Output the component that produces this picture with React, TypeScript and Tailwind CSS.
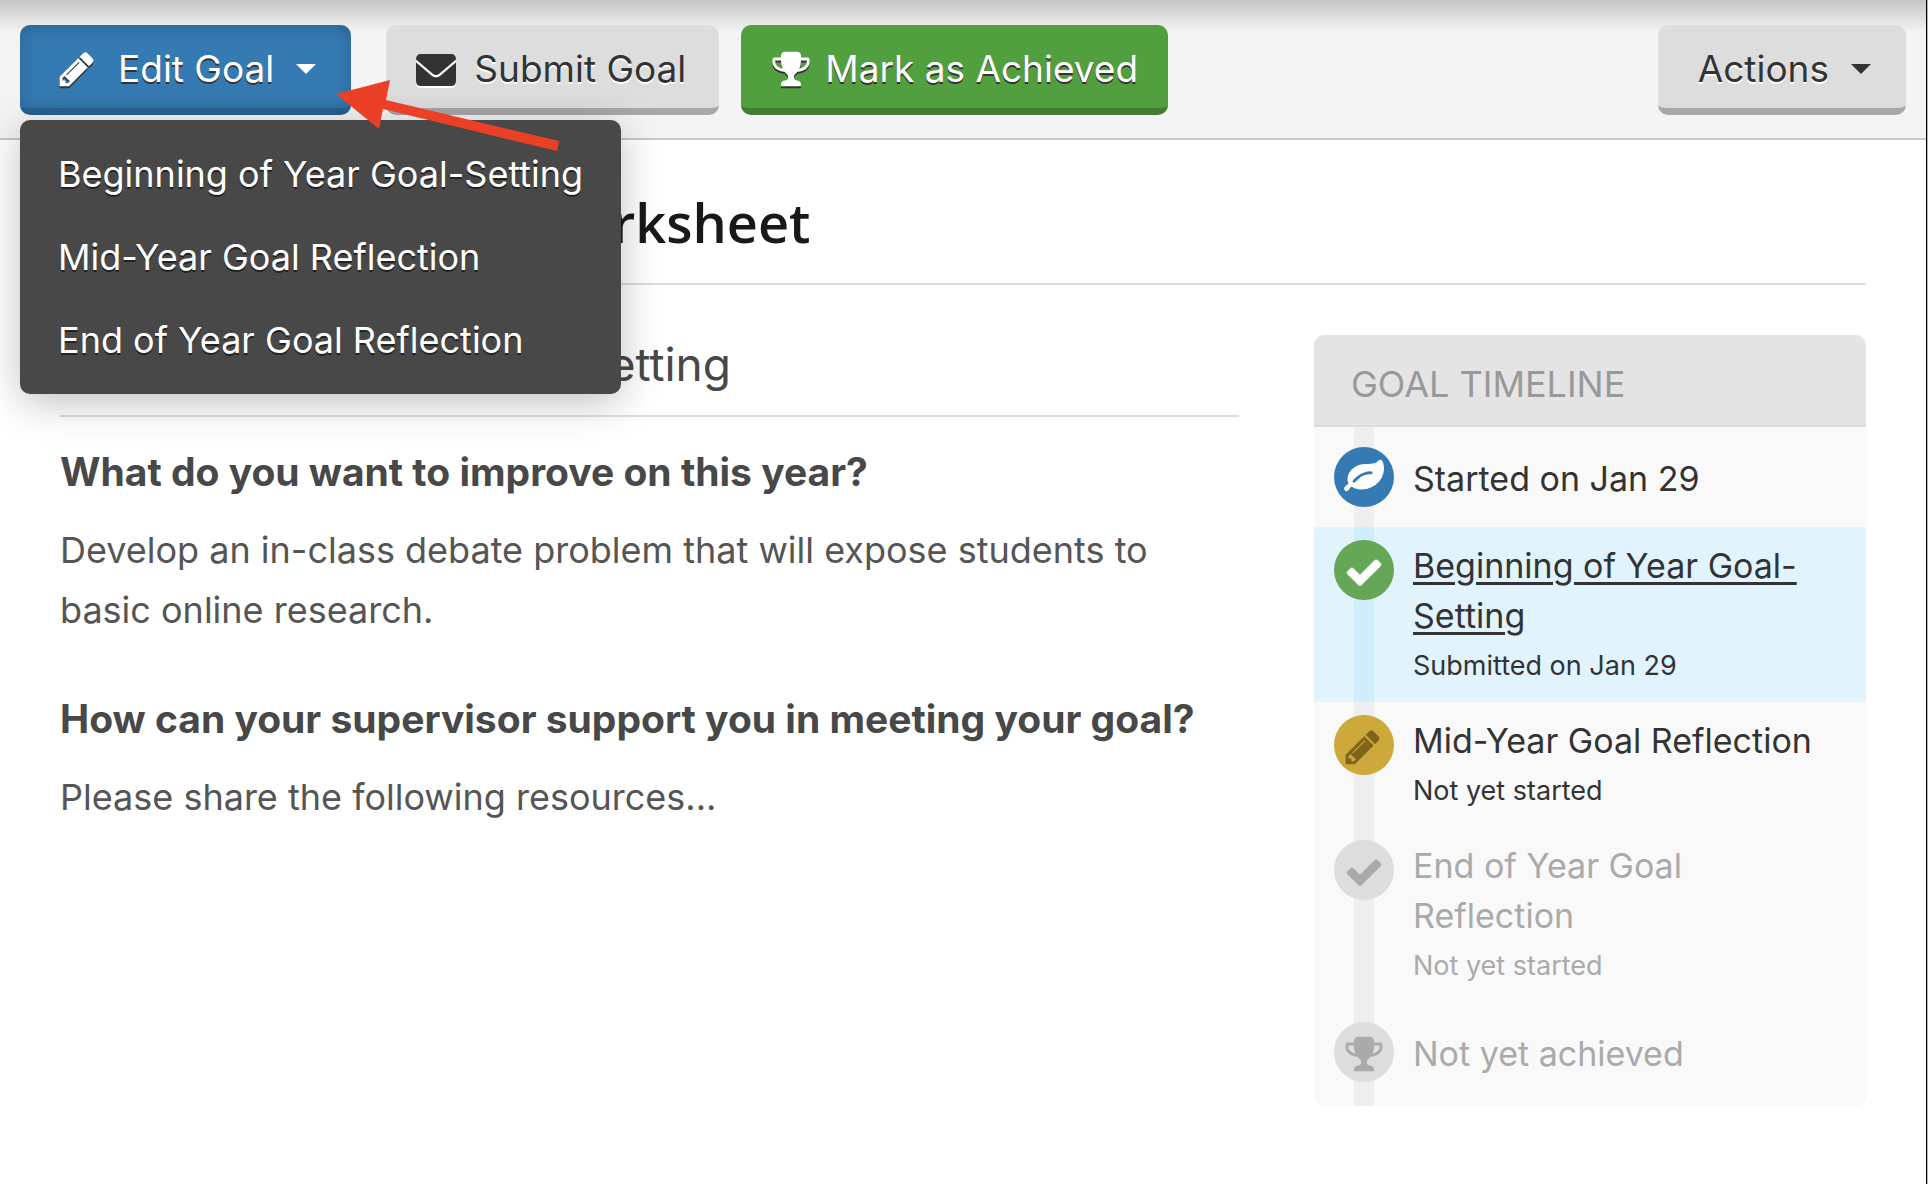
import React from "react";

type Glyph = { d: string; box: string };

const PENCIL: Glyph = {
  box: "-75 0 1792 1792",
  d: "M363 1536l91-91-235-235-91 91v107h128v128h107zm523-928q0-22-22-22-10 0-17 7l-542 542q-7 7-7 17 0 22 22 22 10 0 17-7l542-542q7-7 7-17zm-54-192l416 416-832 832h-416v-416zm683 96q0 53-37 90l-166 166-416-416 166-165q36-38 90-38 53 0 91 38l235 234q37 39 37 91z",
};
const CHECK: Glyph = {
  box: "0 0 1792 1792",
  d: "M1671 566q0 40-28 68l-724 724-136 136q-28 28-68 28t-68-28l-136-136-362-362q-28-28-28-68t28-68l136-136q28-28 68-28t68 28l294 295 656-657q28-28 68-28t68 28l136 136q28 28 28 68z",
};
const TROPHY: Glyph = {
  box: "0 0 1792 1792",
  d: "M522 883q-74-162-74-371h-256v96q0 78 94.5 162t235.5 113zm1078-275v-96h-256q0 209-74 371 141-29 235.5-113t94.5-162zm128-128v128q0 71-41.5 143t-112 130-173 97.5-215.5 44.5q-42 54-95 95-38 34-52.5 72.5t-14.5 89.5q0 54 30.5 91t97.5 37q75 0 133.5 45.5t58.5 114.5v64q0 14-9 23t-23 9h-832q-14 0-23-9t-9-23v-64q0-69 58.5-114.5t133.5-45.5q67 0 97.5-37t30.5-91q0-51-14.5-89.5t-52.5-72.5q-53-41-95-95-113-5-215.5-44.5t-173-97.5-112-130-41.5-143v-128q0-40 28-68t68-28h288v-96q0-66 47-113t113-47h576q66 0 113 47t47 113v96h288q40 0 68 28t28 68z",
};
const LEAF: Glyph = {
  box: "0 0 1792 1792",
  d: "M1280 704q0-26-19-45t-45-19q-172 0-318 49.5t-259.5 134-235.5 219.5q-19 21-19 45 0 26 19 45t45 19q24 0 45-19 27-24 74-71t67-66q137-124 268.5-176t313.5-52q26 0 45-19t19-45zm512-198q0 95-20 193-46 224-184.5 383t-357.5 268q-214 108-438 108-148 0-286-47-15-5-88-42t-96-37q-16 0-39.5 32t-45 70-52.5 70-60 32q-43 0-63.5-17.5t-45.5-59.5q-2-4-6-11t-5.5-10-3-9.5-1.5-13.5q0-35 31-73.5t68-65.5 68-56 31-48q0-4-14-38t-16-44q-9-51-9-104 0-115 43.5-220t119-184.5 170.5-139 204-95.5q55-18 145-25.5t179.5-9 178.5-6 163.5-24 113.5-56.5l29.5-29.5 29.5-28 27-20 36.5-16 43.5-4.5q39 0 70.5 46t47.5 112 24 124 8 96z",
};

function Icon({ glyph, className }: { glyph: Glyph; className?: string }) {
  return (
    <svg viewBox={glyph.box} fill="currentColor" aria-hidden="true" className={className}>
      <path d={glyph.d} />
    </svg>
  );
}

function Envelope() {
  return (
    <svg viewBox="0 0 40 40" aria-hidden="true" className="mr-[18px] size-10 drop-shadow-[0_2px_0_#ffffff]">
      <path fill="currentColor" d="M0 10.500q0-5.500 5-5.500h30q5 0 5 5.500L23.500 24.500q-3.500 3-7 0z" />
      <path fill="currentColor" d="M0 13.500L15.500 26.800q4.500 3.600 9 0L40 13.500v18.500q0 5-5 5H5q-5 0-5-5z" />
    </svg>
  );
}

function Caret() {
  return (
    <svg viewBox="0 0 20 10" fill="currentColor" aria-hidden="true" className="h-[10px] w-5">
      <path d="M0 0h20L10 10z" />
    </svg>
  );
}

const button =
  "flex h-[90px] items-center rounded-[10px] border-b-[7px] pt-1 text-[37px] leading-[48px] whitespace-nowrap";

const steps = [
  { title: "Started on Jan 29", note: "", icon: LEAF, circle: "bg-[#357ab2] text-white", text: "text-[#333333]", row: "py-5", rail: "bg-[#eeeeee]", link: false },
  { title: "Beginning of Year Goal-Setting", note: "Submitted on Jan 29", icon: CHECK, circle: "bg-[#65a657] pt-1 text-white", text: "text-[#333333]", row: "bg-[#e1f3fd] pt-[13px] pb-3", rail: "bg-[#d0edfc]", link: true },
  { title: "Mid-Year Goal Reflection", note: "Not yet started", icon: PENCIL, circle: "bg-[#cda83b] pt-1 text-[#7f651c]", text: "text-[#333333]", row: "pt-[13px] pb-3", rail: "bg-[#eeeeee]", link: false },
  { title: "End of Year Goal Reflection", note: "Not yet started", icon: CHECK, circle: "bg-[#dddddd] pt-1 text-[#aaaaaa]", text: "text-[#aaaaaa]", row: "pt-[13px] pb-3", rail: "bg-[#eeeeee]", link: false },
  { title: "Not yet achieved", note: "", icon: TROPHY, circle: "bg-[#dddddd] pt-1 text-[#aaaaaa]", text: "text-[#aaaaaa]", row: "pt-5 pb-6", rail: "bg-[#eeeeee]", link: false },
];

const menuItems = ["Beginning of Year Goal-Setting", "Mid-Year Goal Reflection", "End of Year Goal Reflection"];

export default function App() {
  return (
    <div className="border-r border-[#b4b4b4] font-['Inter',sans-serif] text-[#333333]">
      <div className="min-h-screen border-r border-black bg-white">
        <header className="relative flex items-start justify-between border-b-2 border-[#c8c8c8] bg-[#f4f4f4] px-5 pt-[25px] pb-[23px]">
          <div className="pointer-events-none absolute inset-x-0 top-0 h-8 bg-linear-to-b from-[#c6c6c6] to-[#f4f4f4]" />
          <div className="relative flex">
            <button className={`${button} mr-[35px] border-[#28608e] bg-[#357ab2] pr-[35px] pl-[38px] text-white shadow-[inset_0_4px_16px_rgba(0,0,0,0.18)] text-shadow-[0_2px_0_#333333]`}>
              <Icon glyph={PENCIL} className="mr-5 size-10 drop-shadow-[0_2px_0_#333333]" />
              <span className="mr-[22px]">Edit Goal</span>
              <Caret />
            </button>
            <button className={`${button} mr-[22px] border-[#a8a8a8] bg-[#dddddd] pr-[33px] pl-[30px] text-shadow-[0_2px_0_#ffffff]`}>
              <Envelope />
              Submit Goal
            </button>
            <button className={`${button} border-[#427d33] bg-[#529f3f] px-[30px] text-white text-shadow-[0_2px_0_#333333]`}>
              <Icon glyph={TROPHY} className="mr-[14px] size-10 drop-shadow-[0_2px_0_#333333]" />
              Mark as Achieved
            </button>
            <ul className="absolute top-[95px] left-0 z-10 rounded-[10px] bg-[#484848] pt-[13px] pb-3 text-[36px] leading-[47px] whitespace-nowrap text-white shadow-[0_8px_40px_rgba(0,0,0,0.25)] text-shadow-[0_2px_0_#222222]">
              {menuItems.map((item) => (
                <li key={item}>
                  <a href="#" className="block px-[38px] py-[18px]">{item}</a>
                </li>
              ))}
            </ul>
            <svg viewBox="336 80 224 72" aria-hidden="true" className="absolute top-[55px] left-[316px] z-20 h-[72px] w-[224px]">
              <path fill="#eb4026" d="M336 94l54-14-4 20 173 41-2 10-174-42-4 20z" />
            </svg>
          </div>
          <button className={`${button} relative border-[#a8a8a8] bg-[#dddddd] pr-[35px] pl-10 text-shadow-[0_2px_0_#ffffff]`}>
            <span className="mr-[22px]">Actions</span>
            <Caret />
          </button>
        </header>

        <main className="px-[60px] pt-[46px]">
          <h1 className="border-b-2 border-[#dddddd] pb-[25px] font-['Open_Sans',sans-serif] text-[54px] leading-[72px] font-semibold text-[#191919]">
            Professional Goal Worksheet
          </h1>
          <div className="mt-[50px] flex items-start gap-[75px]">
            <section className="flex-1">
              <h2 className="border-b-2 border-[#dddddd] pb-[22px] text-[46px] leading-[58px] text-[#484848]">
                Beginning of Year Goal-Setting
              </h2>
              <h3 className="mt-[25px] text-[39px] leading-[60px] font-bold text-[#484848]">What do you want to improve on this year?</h3>
              <p className="mt-[18px] text-[36px] leading-[60px] text-[#555555]">
                Develop an in-class debate problem that will expose students to basic online research.
              </p>
              <h3 className="mt-[49px] text-[39px] leading-[60px] font-bold text-[#484848]">How can your supervisor support you in meeting your goal?</h3>
              <p className="mt-[18px] text-[36px] leading-[60px] text-[#555555]">Please share the following resources...</p>
            </section>
            <aside className="w-[552px] overflow-hidden rounded-[10px] bg-[#f9f9f9]">
              <h2 className="border-b-2 border-[#dcdcdc] bg-[#e4e4e4] px-[37px] pt-6 pb-4 text-[36px] leading-[50px] text-[#999999]">GOAL TIMELINE</h2>
              <ol>
                {steps.map((s) => (
                  <li key={s.title} className={`relative flex gap-[19px] pr-6 pl-5 ${s.row}`}>
                    <div className={`absolute inset-y-0 left-10 w-5 ${s.rail}`} />
                    <div className={`relative flex size-[60px] shrink-0 items-center justify-center rounded-full ${s.circle}`}>
                      <Icon glyph={s.icon} className="size-10" />
                    </div>
                    <div className={`${s.text} ${s.note ? "pt-px" : "pt-[7px]"}`}>
                      <div className="text-[34px] leading-[50px]">
                        {s.link ? <a href="#" className="underline decoration-[3px] underline-offset-[4px]">{s.title}</a> : s.title}
                      </div>
                      {s.note && <div className="-mb-px text-[27px] leading-[50px]">{s.note}</div>}
                    </div>
                  </li>
                ))}
              </ol>
            </aside>
          </div>
        </main>
      </div>
    </div>
  );
}
